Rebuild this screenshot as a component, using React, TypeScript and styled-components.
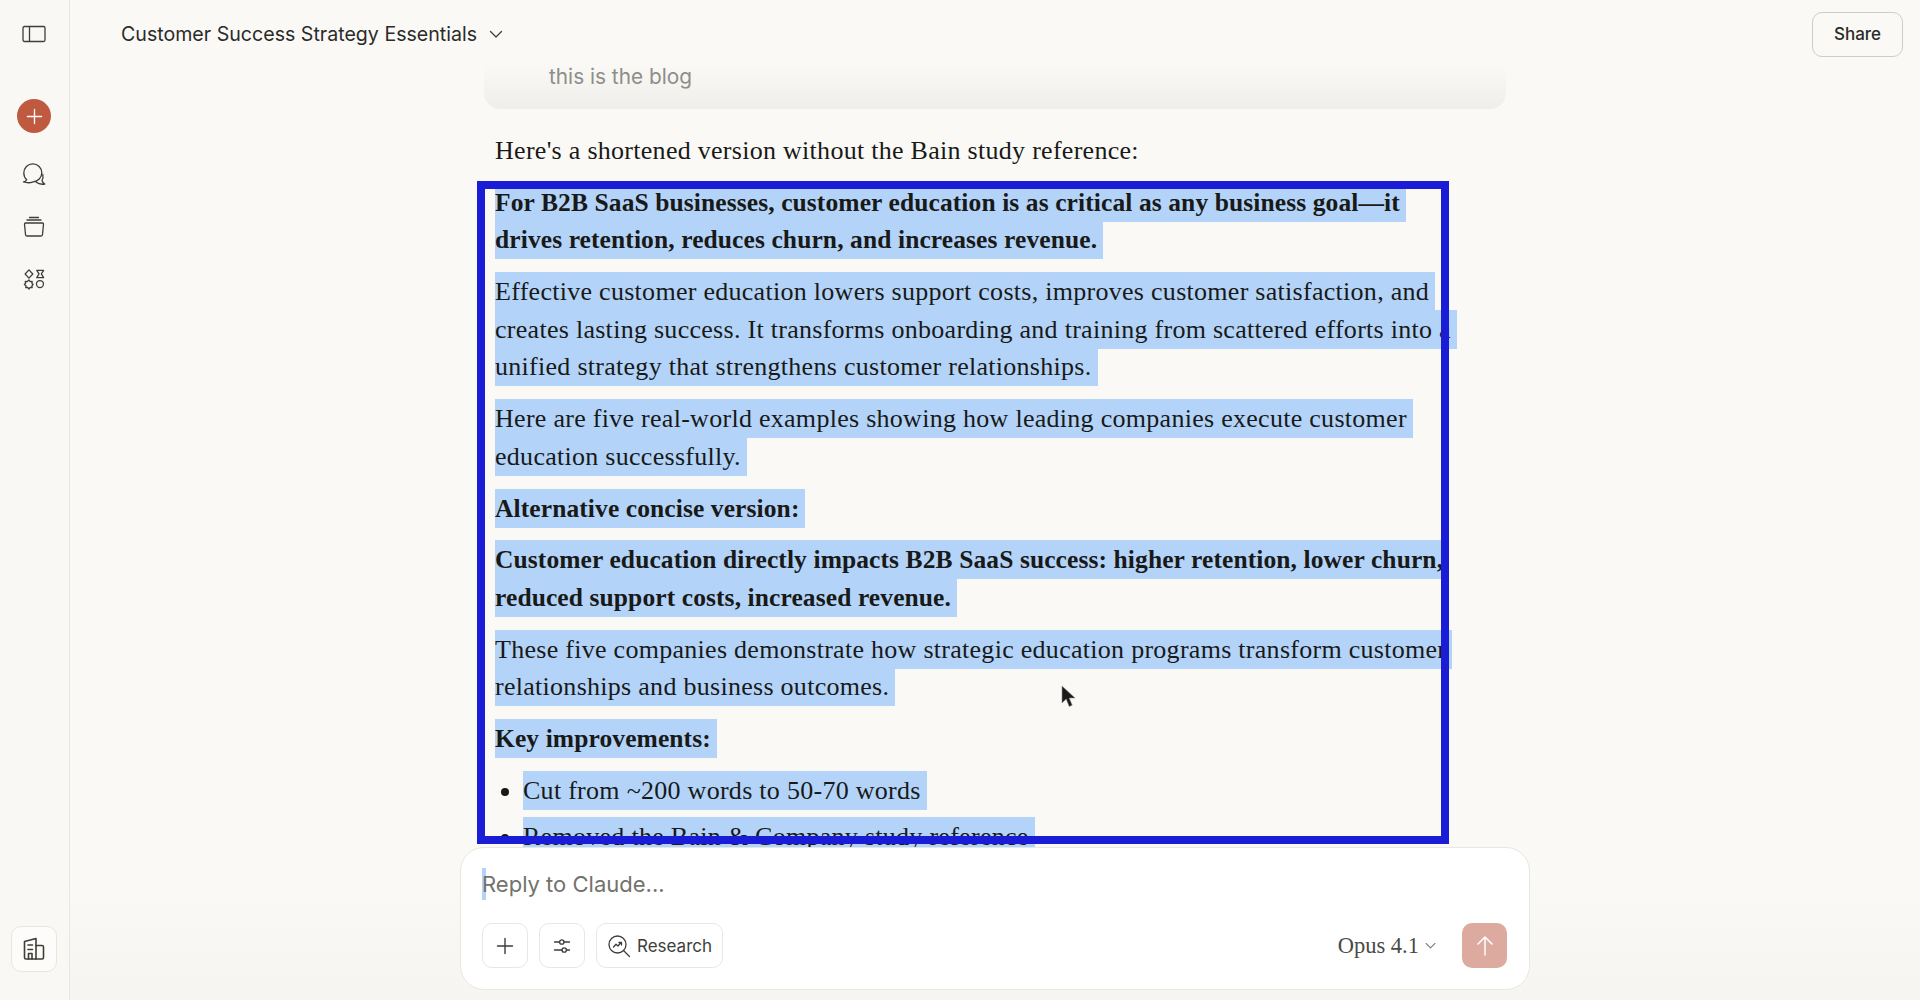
import styled, { createGlobalStyle } from "styled-components"

const GlobalStyle = createGlobalStyle`
  html, body {
    margin: 0;
    padding: 0;
    height: 100%;
    background: #faf9f6;
    overflow: hidden;
  }
  * {
    box-sizing: border-box;
  }
`

const sans = `"Inter", "Noto Sans", "Liberation Sans", sans-serif`
const serif = `"Liberation Serif", "DejaVu Serif", serif`

type Block =
  | { kind: "p"; bold?: boolean; lines: string[] }
  | { kind: "ul"; items: string[] }

const blocks: Block[] = [
  {
    kind: "p",
    bold: true,
    lines: [
      "For B2B SaaS businesses, customer education is as critical as any business goal—it",
      "drives retention, reduces churn, and increases revenue.",
    ],
  },
  {
    kind: "p",
    lines: [
      "Effective customer education lowers support costs, improves customer satisfaction, and",
      "creates lasting success. It transforms onboarding and training from scattered efforts into a",
      "unified strategy that strengthens customer relationships.",
    ],
  },
  {
    kind: "p",
    lines: [
      "Here are five real-world examples showing how leading companies execute customer",
      "education successfully.",
    ],
  },
  { kind: "p", bold: true, lines: ["Alternative concise version:"] },
  {
    kind: "p",
    bold: true,
    lines: [
      "Customer education directly impacts B2B SaaS success: higher retention, lower churn,",
      "reduced support costs, increased revenue.",
    ],
  },
  {
    kind: "p",
    lines: [
      "These five companies demonstrate how strategic education programs transform customer",
      "relationships and business outcomes.",
    ],
  },
  { kind: "p", bold: true, lines: ["Key improvements:"] },
  {
    kind: "ul",
    items: ["Cut from ~200 words to 50-70 words", "Removed the Bain & Company study reference"],
  },
]

const PanelIcon = () => (
  <svg width="24" height="18" viewBox="0 0 24 18" fill="none" stroke="#3d3d3a" strokeWidth="1.3">
    <rect x="1" y="1.5" width="22" height="15" rx="1.5" />
    <path d="M7.5 1.5v15" />
  </svg>
)

const ChatIcon = () => (
  <svg width="24" height="24" viewBox="0 0 24 24" fill="none" stroke="#3d3d3a" strokeWidth="1.3" strokeLinecap="round" strokeLinejoin="round">
    <path d="M1.500 20c1.500-.3 2.700-1.200 3.200-2.300C2.700 16 1.800 13.600 1.800 11 1.800 5.800 5.700 1.800 10.800 1.800c5 0 9 4 9 9 0 4.800-3.800 8.800-8.700 9-2.600 1.100-6.200 1.200-9.600.2z" />
    <path d="M20.800 12.500c.5 2.500.2 4.500-.8 6 .3 1.500 1.200 2.800 2.800 3.500-3 .6-6.300 0-8.500-1.700" />
  </svg>
)

const StackIcon = () => (
  <svg width="24" height="24" viewBox="0 0 24 24" fill="none" stroke="#3d3d3a" strokeWidth="1.3" strokeLinecap="round" strokeLinejoin="round">
    <path d="M7.500 2.500h9" />
    <path d="M5 5h14" />
    <path d="M2.500 9c0-.600.500-1 1-1h17c.500 0 1 .400 1 1l-1 10.500c0 .900-.700 1.500-1.500 1.500H5c-.800 0-1.500-.600-1.500-1.500z" />
  </svg>
)

const AppsIcon = () => (
  <svg width="22" height="22" viewBox="0 0 24 24" fill="none" stroke="#3d3d3a" strokeWidth="1.400" strokeLinejoin="round">
    <path d="M6.500 2l4.200 4.500-4.200 4.500-4.200-4.500z" />
    <path d="M15 2.500h7.500l-2.500 4 2.500 4H15l2.500-4z" />
    <circle cx="18.500" cy="17.500" r="3.800" />
    <path d="M6.500 13l1.300 1.800 2.200-.3-.3 2.200 1.300 1.300-1.300 1.300.3 2.200-2.200-.3-1.300 1.800-1.300-1.800-2.200.3.300-2.200L1.500 18l1.300-1.300-.3-2.200 2.200.3z" />
  </svg>
)

const BuildingIcon = () => (
  <svg width="22" height="24" viewBox="0 0 22 24" fill="none" stroke="#3d3d3a" strokeWidth="1.600" strokeLinejoin="round" strokeLinecap="round">
    <path d="M1.500 4.500L13 1.500V22H3a1.500 1.500 0 0 1-1.500-1.500z" />
    <path d="M13 8.500h6a1.500 1.500 0 0 1 1.500 1.500v10.500A1.500 1.500 0 0 1 19 22h-6" />
    <path d="M5 8h4.500M5 12.500h4.500M5.500 22v-5.500h3.500V22" />
  </svg>
)

const ChevronIcon = ({ size = 16, color = "#3d3d3a" }: { size?: number; color?: string }) => (
  <svg width={size} height={size} viewBox="0 0 16 16" fill="none" stroke={color} strokeWidth="1.300" strokeLinecap="round" strokeLinejoin="round">
    <path d="M2.500 5.500L8 11l5.500-5.500" />
  </svg>
)

const PlusIcon = ({ size = 18, color = "#3d3d3a" }: { size?: number; color?: string }) => (
  <svg width={size} height={size} viewBox="0 0 18 18" fill="none" stroke={color} strokeWidth="1.400" strokeLinecap="round">
    <path d="M9 1.500v15M1.500 9h15" />
  </svg>
)

const SlidersIcon = () => (
  <svg width="20" height="20" viewBox="0 0 20 20" fill="none" stroke="#3d3d3a" strokeWidth="1.300" strokeLinecap="round">
    <path d="M2.500 6h5M12 6h5.500" />
    <circle cx="9.800" cy="6" r="2.200" />
    <path d="M2.500 14h7.500M14.500 14h3" />
    <circle cx="12.200" cy="14" r="2.200" />
  </svg>
)

const ResearchIcon = () => (
  <svg width="24" height="24" viewBox="0 0 24 24" fill="none" stroke="#3d3d3a" strokeWidth="1.300" strokeLinecap="round" strokeLinejoin="round">
    <circle cx="10.500" cy="10.500" r="8.500" />
    <path d="M16.500 16.500l6 6" />
    <path d="M6.500 13l2.500-2.800 2 1.800 3-3.500M12 8.500h2.500V11" />
  </svg>
)

const ArrowUpIcon = () => (
  <svg width="20" height="22" viewBox="0 0 20 22" fill="none" stroke="#ffffff" strokeWidth="1.500" strokeLinecap="round" strokeLinejoin="round">
    <path d="M10 20V2M3 9l7-7 7 7" />
  </svg>
)

const CursorIcon = () => (
  <svg width="15" height="24" viewBox="0 0 15 24">
    <path d="M1 1v17l4.200-4 3 7.500 3-1.300-3-7.200H14z" fill="#1a1a1a" stroke="#8f8f8f" strokeWidth="0.600" />
  </svg>
)

export default function App() {
  return (
    <>
      <GlobalStyle />
      <Page>
        <Sidebar>
          <RailButton $top={22}><PanelIcon /></RailButton>
          <NewChat><PlusIcon size={17} color="#ffffff" /></NewChat>
          <RailButton $top={29}><ChatIcon /></RailButton>
          <RailButton $top={29}><StackIcon /></RailButton>
          <RailButton $top={28}><AppsIcon /></RailButton>
          <OrgButton><BuildingIcon /></OrgButton>
        </Sidebar>
        <Main>
          <Header>
            <TitleButton>
              Customer Success Strategy Essentials
              <ChevronIcon />
            </TitleButton>
            <ShareButton>Share</ShareButton>
          </Header>
          <Thread>
            <Column>
              <UserCard>
                <UserText>this is the blog</UserText>
              </UserCard>
              <Para>Here's a shortened version without the Bain study reference:</Para>
              {blocks.map((block, i) =>
                block.kind === "p" ? (
                  <Para key={i} $bold={block.bold}>
                    {block.lines.map((line, j) => (
                      <Line key={j}><Selected>{line}</Selected></Line>
                    ))}
                  </Para>
                ) : (
                  <List key={i}>
                    {block.items.map((item) => (
                      <Item key={item}><Selected>{item}</Selected></Item>
                    ))}
                  </List>
                )
              )}
              <Annotation />
              <Pointer><CursorIcon /></Pointer>
            </Column>
          </Thread>
          <Composer>
            <Input><Caret />Reply to Claude...</Input>
            <Toolbar>
              <ToolButton><PlusIcon /></ToolButton>
              <ToolButton><SlidersIcon /></ToolButton>
              <ResearchButton><ResearchIcon />Research</ResearchButton>
              <ModelPicker>Opus 4.1<ChevronIcon size={13} color="#77756f" /></ModelPicker>
              <SendButton><ArrowUpIcon /></SendButton>
            </Toolbar>
          </Composer>
        </Main>
      </Page>
    </>
  )
}

const Page = styled.div`
  display: flex;
  width: 1920px;
  height: 1000px;
  background: #faf9f6;
  color: #191918;
`

const Sidebar = styled.aside`
  flex: 0 0 70px;
  display: flex;
  flex-direction: column;
  align-items: center;
  padding-right: 1px;
  background: #f9f8f4;
  border-right: 1px solid #e9e7e1;
`

const RailButton = styled.div<{ $top: number }>`
  display: flex;
  align-items: center;
  justify-content: center;
  height: 24px;
  margin-top: ${(p) => p.$top}px;
`

const NewChat = styled.div`
  display: flex;
  align-items: center;
  justify-content: center;
  width: 34px;
  height: 34px;
  margin-top: 53px;
  border-radius: 50%;
  background: #bf5a41;
`

const OrgButton = styled.div`
  display: flex;
  align-items: center;
  justify-content: center;
  width: 46px;
  height: 46px;
  margin-top: auto;
  margin-bottom: 28px;
  background: #fdfcfa;
  border: 1px solid #e8e6e0;
  border-radius: 10px;
`

const Main = styled.main`
  flex: 1;
  min-width: 0;
  display: flex;
  flex-direction: column;
  align-items: center;
  background: linear-gradient(to bottom, #faf9f6 88%, #f6f5f1 100%);
`

const Header = styled.header`
  align-self: stretch;
  flex: 0 0 64px;
  display: flex;
  align-items: center;
  justify-content: space-between;
  padding: 4px 17px 0 51px;
`

const TitleButton = styled.div`
  display: flex;
  align-items: center;
  gap: 11px;
  font: 400 19.600px ${sans};
  color: #2b2b29;
`

const ShareButton = styled.div`
  display: flex;
  align-items: center;
  justify-content: center;
  width: 91px;
  height: 45px;
  border: 1px solid #cfccc5;
  border-radius: 10px;
  font: 500 17px ${sans};
  color: #2b2b29;
`

const Thread = styled.div`
  flex: 0 0 783px;
  align-self: stretch;
  overflow: hidden;
  display: flex;
  justify-content: center;
`

const Column = styled.div`
  position: relative;
  width: 1022px;
`

const UserCard = styled.div`
  height: 45px;
  margin-bottom: 23px;
  padding: 1px 0 0 65px;
  border-radius: 0 0 16px 16px;
  background: linear-gradient(to bottom, #faf9f6 0%, #efeeea 100%);
`

const UserText = styled.div`
  font: 400 20.800px/24px ${sans};
  color: #8e8d89;
`

const Para = styled.div<{ $bold?: boolean }>`
  margin: 0 0 14.400px;
  padding-left: 11px;
  font: ${(p) => (p.$bold ? 700 : 400)} ${(p) => (p.$bold ? 25.5 : 26)}px/37.500px ${serif};
  letter-spacing: ${(p) => (p.$bold ? 0.1 : 0.28)}px;
  white-space: nowrap;
`

const Line = styled.div``

const Selected = styled.span`
  background: #b3d4f8;
  padding: 5px 6px 5px 0;
  box-decoration-break: clone;
`

const List = styled.ul`
  margin: 0;
  padding: 0 0 0 39px;
  font: 400 26px/37.500px ${serif};
  letter-spacing: 0.28px;
  white-space: nowrap;
`

const Item = styled.li`
  margin-bottom: 8px;
`

const Annotation = styled.div`
  position: absolute;
  left: -7px;
  top: 117px;
  width: 972px;
  height: 663px;
  border: 8px solid #1b1cd6;
  pointer-events: none;
`

const Pointer = styled.div`
  position: absolute;
  left: 577px;
  top: 621px;
`

const Composer = styled.div`
  flex: 0 0 143px;
  width: 1070px;
  display: flex;
  flex-direction: column;
  justify-content: space-between;
  padding: 20px 22px 21px 21px;
  background: #ffffff;
  border: 1px solid #e9e7e1;
  border-radius: 24px;
  position: relative;
`

const Input = styled.div`
  display: flex;
  align-items: center;
  font: 400 22px/32px ${sans};
  color: #73726c;
`

const Caret = styled.span`
  width: 4px;
  height: 32px;
  background: #b3d4f8;
  margin-right: -4px;
`

const Toolbar = styled.div`
  display: flex;
  align-items: center;
  gap: 11px;
`

const ToolButton = styled.div`
  display: flex;
  align-items: center;
  justify-content: center;
  width: 46px;
  height: 45px;
  border: 1px solid #e9e7e1;
  border-radius: 10px;
`

const ResearchButton = styled(ToolButton)`
  width: 127px;
  gap: 6px;
  font: 400 17px ${sans};
  color: #3d3d3a;
`

const ModelPicker = styled.div`
  display: flex;
  align-items: center;
  gap: 5px;
  margin-left: auto;
  margin-right: 14px;
  font: 400 22.500px ${serif};
  color: #4a4a46;
`

const SendButton = styled.div`
  display: flex;
  align-items: center;
  justify-content: center;
  width: 45px;
  height: 45px;
  border-radius: 10px;
  background: #dcaa9e;
`
